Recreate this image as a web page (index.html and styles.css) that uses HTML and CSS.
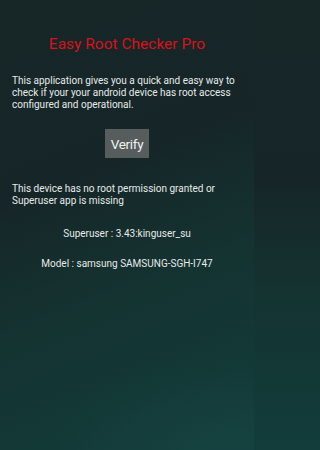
FILE: index.html
```html
<!DOCTYPE html>
<html>
<head>
<meta charset="utf-8">
<link rel="stylesheet" href="styles.css">
</head>
<body>
<div class="screen">
  <h1 class="title">Easy Root Checker Pro</h1>
  <p class="intro">This application gives you a quick and easy way to check if your your android device has root access configured and operational.</p>
  <div class="actions"><button class="verify">Verify</button></div>
  <p class="status">This device has no root permission granted or Superuser app is missing</p>
  <p class="info">Superuser : 3.43:kinguser_su</p>
  <p class="info model">Model : samsung SAMSUNG-SGH-I747</p>
</div>
</body>
</html>
```
FILE: styles.css
```css
html, body {
  margin: 0;
  padding: 0;
}
html {
  min-height: 100%;
  background: linear-gradient(180deg, #172627 0%, #162628 40%, #143331 65%, #123d3b 100%);
}
body {
  font-family: Roboto, "Liberation Sans", sans-serif;
}
.screen {
  width: 254px;
  height: 450px;
  box-sizing: border-box;
  padding: 35px 12px 0 12px;
  background:
    radial-gradient(ellipse 180px 90px at 230px 450px, rgba(24,70,68,0.6), rgba(24,70,68,0) 100%),
    linear-gradient(158deg, #172627 0%, #162628 38%, #143331 62%, #123d3b 100%);
  color: #e6eae9;
  overflow: hidden;
}
.title {
  margin: 0;
  font-weight: 400;
  font-size: 15.5px;
  line-height: 18px;
  color: #d8121b;
  text-align: center;
}
.intro {
  margin: 22px 0 0 0;
  font-size: 10px;
  line-height: 12px;
}
.actions {
  display: flex;
  justify-content: center;
  margin-top: 18px;
}
.verify {
  border: none;
  background: #575d5c;
  color: #f0f2f1;
  font-family: Roboto, "Liberation Sans", sans-serif;
  font-size: 13.5px;
  letter-spacing: -0.3px;
  width: 44px;
  height: 29px;
  padding: 0;
}
.status {
  margin: 25px 0 0 0;
  font-size: 10px;
  line-height: 12px;
}
.info {
  margin: 21px 0 0 0;
  font-size: 10px;
  line-height: 12px;
  text-align: center;
}
.model {
  margin-top: 18px;
}
```
